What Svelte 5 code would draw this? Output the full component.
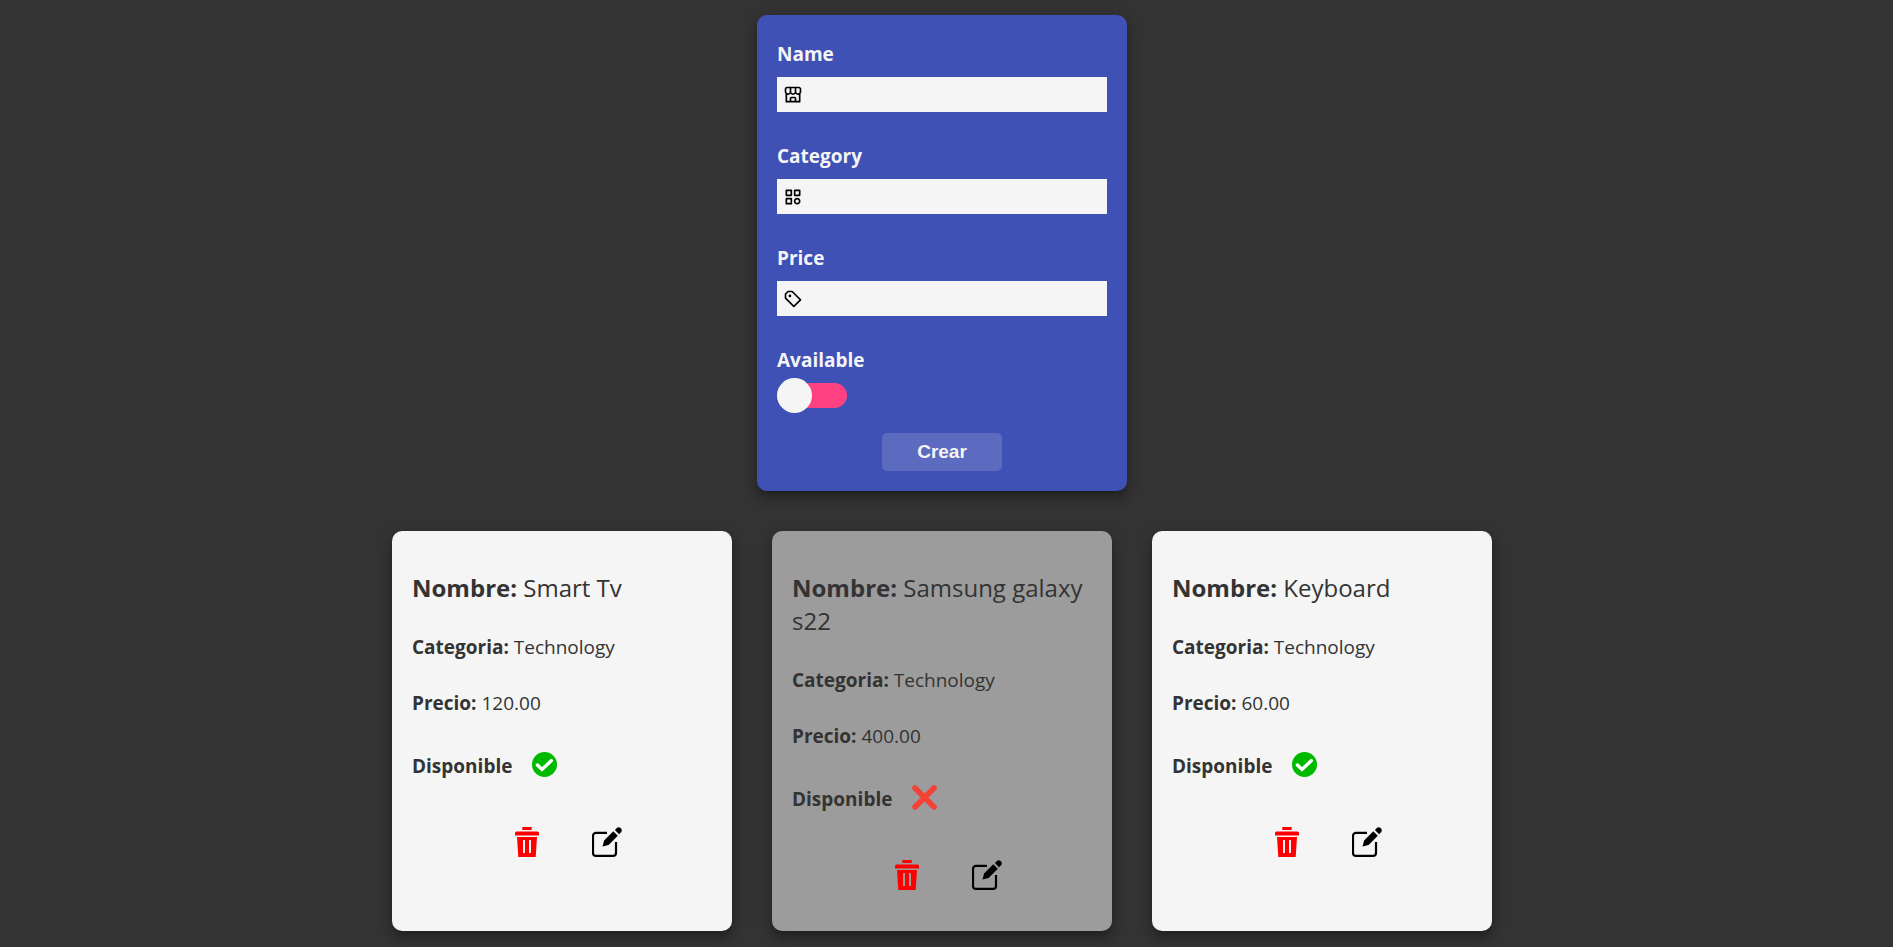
<script>
  let name = $state('');
  let category = $state('');
  let price = $state('');
  let available = $state(false);
  let products = $state([
    { id: 1, name: 'Smart Tv', category: 'Technology', price: '120.00', available: true },
    { id: 2, name: 'Samsung galaxy s22', category: 'Technology', price: '400.00', available: false },
    { id: 3, name: 'Keyboard', category: 'Technology', price: '60.00', available: true }
  ]);

  function create(event) {
    event.preventDefault();
    products.push({ id: Date.now(), name, category, price, available });
    name = category = price = '';
    available = false;
  }

  function remove(id) {
    products = products.filter((product) => product.id !== id);
  }

  function edit(product) {
    name = product.name;
    category = product.category;
    price = product.price;
    available = product.available;
  }
</script>

<main>
  <form onsubmit={create}>
    <div class="field">
      <label for="name">Name</label>
      <div class="box">
        <svg viewBox="0 0 24 24" aria-hidden="true"><path d="M22 5c0-1.654-1.346-3-3-3H5C3.346 2 2 3.346 2 5v2.831c0 1.053.382 2.01 1 2.746V20a1 1 0 0 0 1 1h16a1 1 0 0 0 1-1v-9.424c.618-.735 1-1.692 1-2.746V5zm-2 0v2.831c0 1.14-.849 2.112-1.891 2.167L18 10c-1.103 0-2-.897-2-2V4h3c.552 0 1 .449 1 1zM10 4h4v4c0 1.103-.897 2-2 2s-2-.897-2-2V4zM4 5c0-.551.448-1 1-1h3v4c0 1.103-.897 2-2 2l-.109-.003C4.849 9.944 4 8.971 4 7.831V5zm6 14v-3h4v3h-4zm6 0v-3c0-1.103-.897-2-2-2h-4c-1.103 0-2 .897-2 2v3H5v-7.131c.254.067.517.111.787.125A3.988 3.988 0 0 0 9 10.643c.733.832 1.807 1.357 3 1.357s2.267-.525 3-1.357a3.988 3.988 0 0 0 3.213 1.351c.271-.014.533-.058.787-.125V19h-3z" /></svg>
        <input id="name" type="text" bind:value={name} />
      </div>
    </div>
    <div class="field">
      <label for="category">Category</label>
      <div class="box">
        <svg viewBox="0 0 24 24" aria-hidden="true"><path d="M10 3H4a1 1 0 0 0-1 1v6a1 1 0 0 0 1 1h6a1 1 0 0 0 1-1V4a1 1 0 0 0-1-1zM9 9H5V5h4v4zm11-6h-6a1 1 0 0 0-1 1v6a1 1 0 0 0 1 1h6a1 1 0 0 0 1-1V4a1 1 0 0 0-1-1zm-1 6h-4V5h4v4zm-9 4H4a1 1 0 0 0-1 1v6a1 1 0 0 0 1 1h6a1 1 0 0 0 1-1v-6a1 1 0 0 0-1-1zm-1 6H5v-4h4v4zm8-6c-2.206 0-4 1.794-4 4s1.794 4 4 4 4-1.794 4-4-1.794-4-4-4zm0 6c-1.103 0-2-.897-2-2s.897-2 2-2 2 .897 2 2-.897 2-2 2z" /></svg>
        <input id="category" type="text" bind:value={category} />
      </div>
    </div>
    <div class="field">
      <label for="price">Price</label>
      <div class="box">
        <svg viewBox="0 0 24 24" aria-hidden="true"><path d="M11.707 2.293A.997.997 0 0 0 11 2H6a.997.997 0 0 0-.707.293l-3 3A.996.996 0 0 0 2 6v5c0 .266.105.52.293.707l10 10a.997.997 0 0 0 1.414 0l8-8a.999.999 0 0 0 0-1.414l-10-10zM13 19.586l-9-9V6.414L6.414 4h4.172l9 9L13 19.586z" /><circle cx="8.353" cy="8.353" r="1.647" /></svg>
        <input id="price" type="text" bind:value={price} />
      </div>
    </div>
    <div class="available">
      <label for="available">Available</label>
      <input id="available" class="switch" type="checkbox" bind:checked={available} />
    </div>
    <button class="create" type="submit">Crear</button>
  </form>

  <section class="products">
    {#each products as product (product.id)}
      <article class:unavailable={!product.available}>
        <h2><b>Nombre:</b> {product.name}</h2>
        <p><b>Categoria:</b> {product.category}</p>
        <p><b>Precio:</b> {product.price}</p>
        <div class="status">
          <b>Disponible</b>
          {#if product.available}
            <svg viewBox="0 0 25 25" role="img" aria-label="Sí"><circle cx="12.5" cy="12.5" r="12.5" fill="#00ba00" /><path d="M5.400 13L10 17.500L19.400 8.600" fill="none" stroke="#fff" stroke-width="3.400" stroke-linecap="round" stroke-linejoin="miter" /></svg>
          {:else}
            <svg viewBox="0 0 25 25" role="img" aria-label="No"><path d="M3 3L22 22M22 3L3 22" fill="none" stroke="#f44336" stroke-width="5.600" stroke-linecap="round" /></svg>
          {/if}
        </div>
        <div class="actions">
          <button type="button" aria-label="Eliminar" onclick={() => remove(product.id)}>
            <svg viewBox="0 0 30 30"><path fill="#f00" fill-rule="evenodd" d="M10.300 0h9.400v3h-9.400zM4.500 4.500h21a1.500 1.500 0 0 1 1.500 1.500v2.500H3V6a1.500 1.500 0 0 1 1.500-1.500zM5 10h20l-1.300 20H6.300zM11 13v13h2V13zM17 13v13h2V13z" /></svg>
          </button>
          <button type="button" aria-label="Editar" onclick={() => edit(product)}>
            <svg viewBox="0 0 30 30"><path d="M15 5.900H4a3 3 0 0 0-3 3v17a3 3 0 0 0 3 3h17a3 3 0 0 0 3-3V15" fill="none" stroke="#000" stroke-width="2.200" /><path d="M21.300 4.200L25.800 8.700L16.600 17.900L10.500 19.500L12.100 13.400ZM22.900 3.100L24.900 1A3 3 0 0 1 29.100 5.200L27 7.200Z" /></svg>
          </button>
        </div>
      </article>
    {/each}
  </section>
</main>

<style>
  :global(body) {
    margin: 0;
    background: #333;
  }

  main {
    display: flex;
    flex-direction: column;
    align-items: center;
    gap: 40px;
    padding: 15px 9px 16px 0;
    color: #333;
    font: 19px/29px "Open Sans", sans-serif;
  }

  form {
    box-sizing: border-box;
    display: flex;
    flex-direction: column;
    width: 370px;
    max-width: 100%;
    padding: 25px 20px 20px;
    border-radius: 10px;
    background: #3f51b5;
  }

  form,
  article {
    box-shadow:
      0 5px 5px -3px rgba(0, 0, 0, 0.2),
      0 8px 10px 1px rgba(0, 0, 0, 0.14),
      0 3px 14px 2px rgba(0, 0, 0, 0.12);
  }

  label {
    color: #f5f5f5;
    font-weight: 700;
  }

  .field {
    display: flex;
    flex-direction: column;
    gap: 8px;
    margin-bottom: 30px;
  }

  .box {
    display: flex;
    align-items: center;
    height: 35px;
    background: #f5f5f5;
  }

  .box svg {
    width: 20px;
    height: 20px;
    margin: 1px 6px 0;
    color: #000;
  }

  .box input {
    flex: 1;
    min-width: 0;
    height: 100%;
    padding: 0;
    border: 0;
    outline: 0;
    background: transparent;
    font: inherit;
  }

  .available {
    display: flex;
    flex-direction: column;
    align-items: flex-start;
    gap: 3px;
    margin-bottom: 20px;
  }

  .switch {
    appearance: none;
    display: flex;
    align-items: center;
    width: 70px;
    height: 25px;
    margin: 5px 0;
    border-radius: 13px;
    background: #ff4081;
    cursor: pointer;
  }

  .switch::before {
    content: "";
    width: 35px;
    height: 35px;
    border-radius: 50%;
    background: #f5f5f5;
  }

  .switch:checked {
    justify-content: flex-end;
    background: #00ba00;
  }

  .create {
    align-self: center;
    width: 120px;
    height: 38px;
    padding: 0;
    border: 0;
    border-radius: 5px;
    background: #5c6bc0;
    color: #f5f5f5;
    font: 700 19px "Liberation Sans", sans-serif;
    cursor: pointer;
  }

  .products {
    display: flex;
    flex-wrap: wrap;
    justify-content: center;
    gap: 40px;
  }

  article {
    box-sizing: border-box;
    width: 340px;
    min-height: 400px;
    padding: 40px 20px;
    border-radius: 10px;
    background: #f5f5f5;
  }

  .unavailable {
    background: #9c9c9c;
  }

  h2 {
    margin: 0 0 29px;
    font-size: 24px;
    font-weight: 400;
    line-height: 33px;
  }

  p {
    margin: 0 0 27px;
  }

  .status {
    display: flex;
    align-items: center;
    gap: 20px;
    height: 42px;
  }

  .status svg {
    width: 25px;
    height: 25px;
    margin-bottom: 4px;
  }

  .actions {
    display: flex;
    justify-content: center;
    gap: 50px;
    margin-top: 40px;
    padding-left: 10px;
  }

  .actions button {
    width: 30px;
    height: 30px;
    padding: 0;
    border: 0;
    background: none;
    cursor: pointer;
  }

  .actions svg {
    display: block;
    width: 30px;
    height: 30px;
  }
</style>
